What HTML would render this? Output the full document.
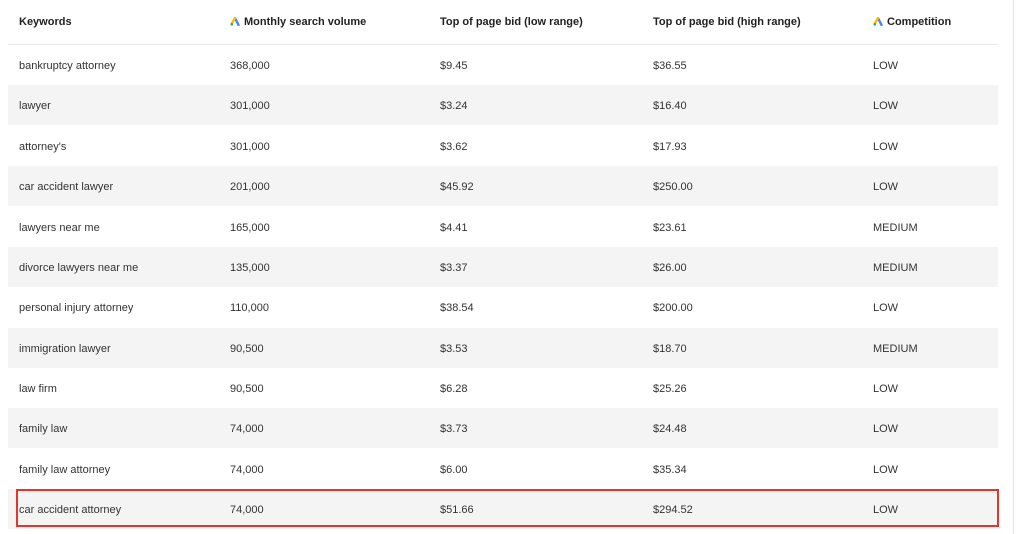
<!DOCTYPE html>
<html><head><style>
body{margin:0;background:#fff;width:1024px;height:534px;overflow:hidden;font-family:"Liberation Sans",sans-serif;position:relative}
.r{position:absolute;left:8px;width:990px;height:40px;font-size:11px;color:#333}
.r span{position:absolute;top:15px}
.g{background:#f4f4f4}
.h{font-weight:bold;color:#222;height:44px;top:0;border-bottom:1px solid #e8e8e8}
.h span{top:16px}
.c1{left:11px}.c2{left:222px}.c3{left:432px}.c4{left:645px}.c5{left:865px}
.rb{position:absolute;left:16px;top:489px;width:979px;height:34px;border:2px solid #e8322a}
.sb{position:absolute;left:1013px;top:0;width:1px;height:534px;background:#e6e6e6}
.ic{display:inline-block;vertical-align:-1px;margin-right:4px}
</style></head><body>
<div class="r h"><span class="c1">Keywords</span><span class="c2"><svg class="ic" width="10" height="9" viewBox="0 0 10 9"><path d="M5 1 L8.5 8" stroke="#4285f4" stroke-width="2.4" stroke-linecap="round"/><path d="M5 1 L1.8 6.5" stroke="#fbbc04" stroke-width="2.4" stroke-linecap="round"/><circle cx="1.8" cy="7.3" r="1.3" fill="#34a853"/></svg>Monthly search volume</span><span class="c3">Top of page bid (low range)</span><span class="c4">Top of page bid (high range)</span><span class="c5"><svg class="ic" width="10" height="9" viewBox="0 0 10 9"><path d="M5 1 L8.5 8" stroke="#4285f4" stroke-width="2.4" stroke-linecap="round"/><path d="M5 1 L1.8 6.5" stroke="#fbbc04" stroke-width="2.4" stroke-linecap="round"/><circle cx="1.8" cy="7.3" r="1.3" fill="#34a853"/></svg>Competition</span></div>
<div class="r" style="top:45px"><span class="c1">bankruptcy attorney</span><span class="c2">368,000</span><span class="c3">$9.45</span><span class="c4">$36.55</span><span class="c5">LOW</span></div>
<div class="r g" style="top:85px"><span class="c1">lawyer</span><span class="c2">301,000</span><span class="c3">$3.24</span><span class="c4">$16.40</span><span class="c5">LOW</span></div>
<div class="r" style="top:126px"><span class="c1">attorney's</span><span class="c2">301,000</span><span class="c3">$3.62</span><span class="c4">$17.93</span><span class="c5">LOW</span></div>
<div class="r g" style="top:166px"><span class="c1">car accident lawyer</span><span class="c2">201,000</span><span class="c3">$45.92</span><span class="c4">$250.00</span><span class="c5">LOW</span></div>
<div class="r" style="top:207px"><span class="c1">lawyers near me</span><span class="c2">165,000</span><span class="c3">$4.41</span><span class="c4">$23.61</span><span class="c5">MEDIUM</span></div>
<div class="r g" style="top:247px"><span class="c1">divorce lawyers near me</span><span class="c2">135,000</span><span class="c3">$3.37</span><span class="c4">$26.00</span><span class="c5">MEDIUM</span></div>
<div class="r" style="top:287px"><span class="c1">personal injury attorney</span><span class="c2">110,000</span><span class="c3">$38.54</span><span class="c4">$200.00</span><span class="c5">LOW</span></div>
<div class="r g" style="top:328px"><span class="c1">immigration lawyer</span><span class="c2">90,500</span><span class="c3">$3.53</span><span class="c4">$18.70</span><span class="c5">MEDIUM</span></div>
<div class="r" style="top:368px"><span class="c1">law firm</span><span class="c2">90,500</span><span class="c3">$6.28</span><span class="c4">$25.26</span><span class="c5">LOW</span></div>
<div class="r g" style="top:408px"><span class="c1">family law</span><span class="c2">74,000</span><span class="c3">$3.73</span><span class="c4">$24.48</span><span class="c5">LOW</span></div>
<div class="r" style="top:449px"><span class="c1">family law attorney</span><span class="c2">74,000</span><span class="c3">$6.00</span><span class="c4">$35.34</span><span class="c5">LOW</span></div>
<div class="r g" style="top:489px"><span class="c1">car accident attorney</span><span class="c2">74,000</span><span class="c3">$51.66</span><span class="c4">$294.52</span><span class="c5">LOW</span></div>
<div class="rb"></div>
<div class="sb"></div>
</body></html>
